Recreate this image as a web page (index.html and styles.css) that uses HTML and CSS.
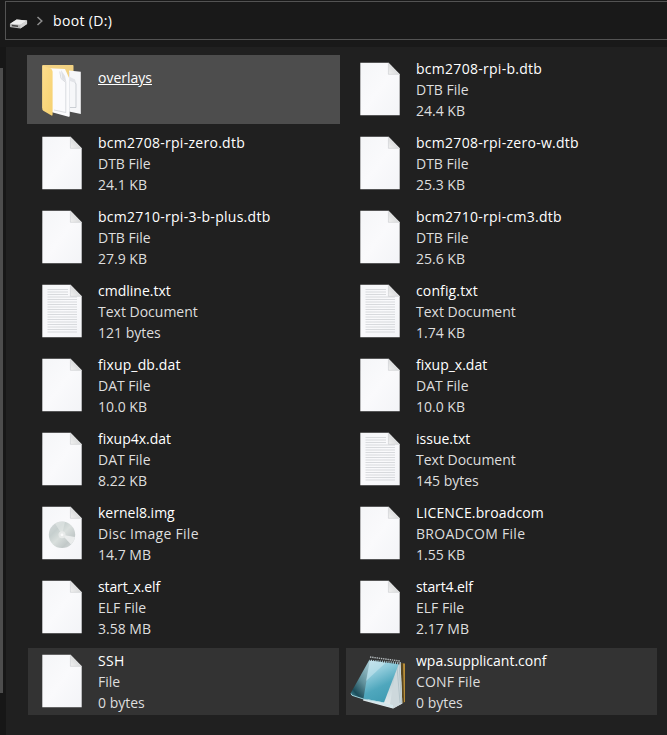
FILE: index.html
```
<!DOCTYPE html>
<html lang="en">
<head>
<meta charset="utf-8">
<title>boot (D:)</title>
<link rel="stylesheet" href="styles.css">
</head>
<body>
<svg class="defs" width="0" height="0" aria-hidden="true">
  <defs>
    <linearGradient id="paper" x1="0" y1="0" x2="1" y2="1"><stop offset="0" stop-color="#f5f6f8"/><stop offset=".5" stop-color="#fafafc"/><stop offset="1" stop-color="#f3f4f7"/></linearGradient>
    <linearGradient id="fold" x1="0" y1="1" x2="1" y2="0"><stop offset="0" stop-color="#f2f2f2"/><stop offset="1" stop-color="#c4c6c8"/></linearGradient>
    <linearGradient id="disc" x1="0" y1="0" x2="1" y2="1"><stop offset="0" stop-color="#d5d9da"/><stop offset=".3" stop-color="#c6cfce"/><stop offset=".5" stop-color="#d9dfdd"/><stop offset=".75" stop-color="#c2c9c9"/><stop offset="1" stop-color="#dadddd"/></linearGradient>
    <linearGradient id="folder" x1="0" y1="0" x2="1" y2="1"><stop offset="0" stop-color="#fddd8c"/><stop offset="1" stop-color="#f5d06f"/></linearGradient>
    <linearGradient id="glass" x1=".2" y1="0" x2=".6" y2="1"><stop offset="0" stop-color="#b9dce6"/><stop offset=".3" stop-color="#8fcbdb"/><stop offset=".65" stop-color="#4fa7bd"/><stop offset="1" stop-color="#3f9bb2"/></linearGradient>
    <linearGradient id="flap" x1=".8" y1="0" x2=".2" y2="1"><stop offset="0" stop-color="#a6cbd4"/><stop offset=".5" stop-color="#60909b"/><stop offset=".85" stop-color="#1b4c59"/><stop offset="1" stop-color="#3d8292"/></linearGradient>
    <linearGradient id="pad" x1="0" y1="0" x2="0" y2="1"><stop offset="0" stop-color="#a5bcc3"/><stop offset="1" stop-color="#e7edef"/></linearGradient>
  </defs>
  <symbol id="file" viewBox="0 0 40 54">
    <path d="M.3.8H28.5L39.7 12.2V53.2H.3Z" fill="url(#paper)"/>
    <path d="M28.5.8 39.7 12.2H28.5Z" fill="url(#fold)"/>
    <path d="M28.4.8V12.3H39.7" fill="none" stroke="#c8cacc" stroke-width=".6"/>
  </symbol>
  <symbol id="text" viewBox="0 0 40 54">
    <use href="#file" width="40" height="54"/>
    <path d="M5.5 5.5H26M5.5 8H26M5.5 10.5H26M5.5 13H35M5.5 15.5H35M5.5 18H35M5.5 20.5H35M5.5 23H35M5.5 25.5H35M5.5 28H35M5.5 30.5H35M5.5 33H35M5.5 35.5H35M5.5 38H35M5.5 40.5H35M5.5 43H35M5.5 45.5H35M5.5 48H35" stroke="#cfd2d5" stroke-width=".8"/>
  </symbol>
  <symbol id="image" viewBox="0 0 40 54">
    <use href="#file" width="40" height="54"/>
    <circle cx="20" cy="28.8" r="13.2" fill="url(#disc)"/>
    <path d="M20 28.8 13 17.6A13.2 13.2 0 0 1 23 16Z" fill="#e9eeec" opacity=".5"/>
    <path d="M20 28.8 33 31A13.2 13.2 0 0 1 29 38.5Z" fill="#f2f4f4" opacity=".8"/>
    <circle cx="20" cy="28.8" r="3.5" fill="#e7eae9"/><circle cx="20" cy="28.8" r="1.4" fill="#fbfbfb"/>
  </symbol>
  <symbol id="open-folder" viewBox="0 0 40 56">
    <path d="M.3 3.8Q.3 3 1.1 3H30.7Q31.5 3 31.5 3.8V48H5L.3 46Z" fill="#f2d283"/>
    <path d="M27 8.5 38.8 9.8V52L27 49.5Z" fill="#f6f7f9"/>
    <path d="M29 18Q33.5 19 34 22V45.5H28" fill="none" stroke="#b9bdc4" stroke-width=".7"/>
    <path d="M28 15 33 17.5 34 21 28 19Z" fill="#e2e4e8"/>
    <path d="M6.5 6.3 23 7 27.4 16.8V55L10 50.3Z" fill="#fbfbfd"/>
    <path d="M19 8 20 16.5 24.5 20.5 23 14Z" fill="#dfe1e5"/>
    <path d="M12 48 23.8 50.5V20.5L19 16.5 17.8 9.5" fill="none" stroke="#cbced4" stroke-width=".7"/>
    <path d="M27.5 10V54" fill="none" stroke="#dfe2e7" stroke-width=".7"/>
    <path d="M.3 3.5 8.8 6.6Q10.3 7.4 10.6 9.5V52.5Q10.6 54 9.5 53.5L1.3 48.7Q.3 48.2.3 47Z" fill="url(#folder)"/>
  </symbol>
  <symbol id="notepad" viewBox="0 0 56 56">
    <path d="M45 10 55 10.5V49L45 52Z" fill="#b98e38"/>
    <path d="M50 10H53L54 50H51Z" fill="#584621"/>
    <path d="M50.5 9 52.3 50.5 43 55.5 13 47.5 25 7Z" fill="url(#pad)"/>
    <path d="M47 9 50.5 9 52.3 50.5 43 55.5 40 51Z" fill="#cdd8dc"/>
    <path d="M46.8 11 50 50M49 10 51.5 50" stroke="#9bb0b8" stroke-width=".5"/>
    <path d="M19.5 6.5 .8 40 2 42.2 17.5 47 21 8Z" fill="url(#flap)"/>
    <path d="M20 6.5 48.8 11 34 49.5 13.5 45.5Z" fill="url(#glass)"/>
    <path d="M20 7 36 9.5 16 28Z" fill="#d7eef3" opacity=".45"/>
    <path d="M1 40.5 2 42.3 13.5 46 34 50" fill="none" stroke="#9fd3df"/>
    <path d="M13 46.5 43 55V52L30 49Z" fill="#d5e7ec"/>
    <path d="M20 5.5 50 9.5" stroke="#333" stroke-width="4" stroke-dasharray="1.2 1"/>
    <path d="M20 4 50 8" stroke="#b4babc" stroke-width="1.4" stroke-dasharray="1.4 .8"/>
  </symbol>
</svg>

<header class="address">
  <svg class="drive" viewBox="0 0 20 12"><path d="M1 6 8 1.2 19 2.2V6L12 10.8 2 9.5Q1 9.3 1 8.5Z" fill="#b8b8b8"/><path d="M1 5.8 8 1.2 19 2.2 12 6.8Z" fill="#eeeeee"/><path d="M12 6.8 19 2.2V6L12 10.8Z" fill="#d4d4d4"/><path d="M3 7.6 9.5 8.4" stroke="#444" stroke-width="1.4"/></svg>
  <svg class="chevron" viewBox="0 0 8 10"><path d="M1.5 1 5.8 5 1.5 9" fill="none" stroke="#8e8e8e" stroke-width="1.5"/></svg>
  <span class="path">boot (D:)</span>
</header>
<div class="body">
  <div class="rail"><div class="thumb"></div></div>
  <main class="files">
    <div class="item hover"><svg class="icon tall"><use href="#open-folder"/></svg><div class="info folder"><b>overlays</b></div></div>
    <div class="item"><svg class="icon"><use href="#file"/></svg><div class="info"><b class="loose">bcm2708-rpi-b.dtb</b><span>DTB File</span><span>24.4 KB</span></div></div>
    <div class="item"><svg class="icon"><use href="#file"/></svg><div class="info"><b class="loose">bcm2708-rpi-zero.dtb</b><span>DTB File</span><span>24.1 KB</span></div></div>
    <div class="item"><svg class="icon"><use href="#file"/></svg><div class="info"><b class="loose">bcm2708-rpi-zero-w.dtb</b><span>DTB File</span><span>25.3 KB</span></div></div>
    <div class="item"><svg class="icon"><use href="#file"/></svg><div class="info"><b class="loose">bcm2710-rpi-3-b-plus.dtb</b><span>DTB File</span><span>27.9 KB</span></div></div>
    <div class="item"><svg class="icon"><use href="#file"/></svg><div class="info"><b class="loose">bcm2710-rpi-cm3.dtb</b><span>DTB File</span><span>25.6 KB</span></div></div>
    <div class="item"><svg class="icon"><use href="#text"/></svg><div class="info"><b>cmdline.txt</b><span>Text Document</span><span>121 bytes</span></div></div>
    <div class="item"><svg class="icon"><use href="#text"/></svg><div class="info"><b class="medium">config.txt</b><span>Text Document</span><span>1.74 KB</span></div></div>
    <div class="item"><svg class="icon"><use href="#file"/></svg><div class="info"><b class="medium">fixup_db.dat</b><span>DAT File</span><span>10.0 KB</span></div></div>
    <div class="item"><svg class="icon"><use href="#file"/></svg><div class="info"><b>fixup_x.dat</b><span>DAT File</span><span>10.0 KB</span></div></div>
    <div class="item"><svg class="icon"><use href="#file"/></svg><div class="info"><b>fixup4x.dat</b><span>DAT File</span><span>8.22 KB</span></div></div>
    <div class="item"><svg class="icon"><use href="#text"/></svg><div class="info"><b>issue.txt</b><span>Text Document</span><span>145 bytes</span></div></div>
    <div class="item"><svg class="icon"><use href="#image"/></svg><div class="info"><b>kernel8.img</b><span class="loose">Disc Image File</span><span>14.7 MB</span></div></div>
    <div class="item"><svg class="icon"><use href="#file"/></svg><div class="info"><b class="medium">LICENCE.broadcom</b><span class="loose">BROADCOM File</span><span>1.55 KB</span></div></div>
    <div class="item"><svg class="icon"><use href="#file"/></svg><div class="info"><b class="tight">start_x.elf</b><span>ELF File</span><span>3.58 MB</span></div></div>
    <div class="item"><svg class="icon"><use href="#file"/></svg><div class="info"><b class="tight">start4.elf</b><span>ELF File</span><span>2.17 MB</span></div></div>
    <div class="item selected"><svg class="icon"><use href="#file"/></svg><div class="info"><b class="loose">SSH</b><span>File</span><span>0 bytes</span></div></div>
    <div class="item selected"><svg class="icon wide"><use href="#notepad"/></svg><div class="info"><b>wpa.supplicant.conf</b><span class="medium">CONF File</span><span>0 bytes</span></div></div>
  </main>
</div>
</body>
</html>
```
FILE: styles.css
```
* { box-sizing: border-box; }
body {
  margin: 0;
  width: 667px;
  height: 735px;
  overflow: hidden;
  background: #191919;
  font-family: "Segoe UI", "Open Sans", "Noto Sans", sans-serif;
  font-size: 14px;
  line-height: 21px;
  color: #fff;
  padding-top: 1px;
}
.defs { display: block; }
.address {
  height: 39px;
  margin-left: 5px;
  border: 1px solid #535353;
  border-right: 0;
  display: flex;
  align-items: center;
  padding-left: 3px;
}
.drive { width: 19px; height: 12px; margin-top: 7px; }
.chevron { width: 8px; height: 10px; margin: 0 9px 0 8px; }
.path { letter-spacing: .35px; }
.body { display: flex; height: 688px; margin-top: 7px; }
.rail { width: 6px; padding-top: 21px; background: #171717; }
.thumb { width: 3px; height: 625px; background: #4d4d4d; }
.files {
  flex: 1;
  background: #202020;
  padding: 8px 9px 0 21px;
  display: grid;
  grid-template-columns: 313px 312px;
  grid-auto-rows: 69px;
  gap: 5px;
  align-content: start;
}
.item { display: flex; padding: 3px 0 3px 15px; }
.hover { background: #4d4d4d; }
.selected { background: linear-gradient(#333, #333) 1px 1px / 311px 67px no-repeat; }
.icon { width: 40px; height: 54px; margin: 4px 16px 0 0; flex: none; }
.icon.tall { height: 56px; }
.icon.wide { width: 56px; height: 56px; margin: 3px 10px 0 -10px; }
.info { display: flex; flex-direction: column; white-space: nowrap; }
.info b { font-weight: 400; }
.info span { color: #dedede; }
.info .loose { letter-spacing: .28px; }
.info .medium { letter-spacing: .13px; }
.info .tight { letter-spacing: -.12px; }
.folder { padding-top: 9px; }
.folder b { text-decoration: underline; }
```
